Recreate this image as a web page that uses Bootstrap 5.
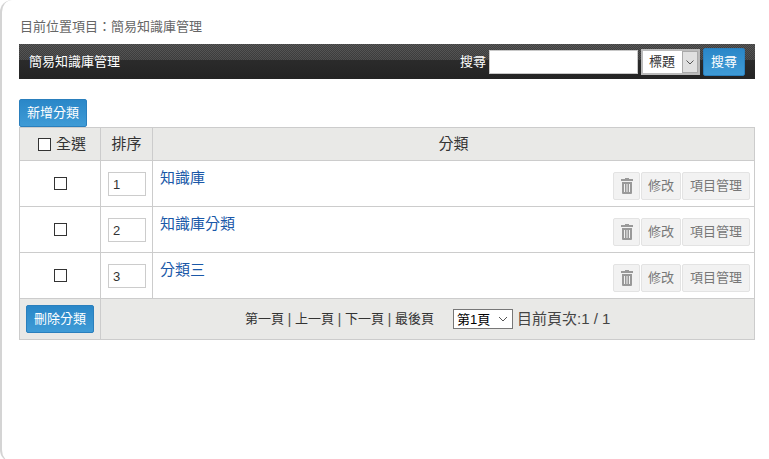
<!DOCTYPE html>
<html lang="zh-Hant">
<head>
<meta charset="utf-8">
<title>簡易知識庫管理</title>
<link href="https://cdn.jsdelivr.net/npm/bootstrap@5.3.0/dist/css/bootstrap.min.css" rel="stylesheet">
<style>
html,body{height:100%;background:#fff;overflow:hidden}
body{font-family:"Liberation Sans","Noto Sans CJK TC",sans-serif;font-size:14px;color:#333}
.shell{height:462px;border:solid #d4d4d4;border-width:0 0 0 2px;border-radius:12px 0 0 12px;padding:18px 14px 0 17px}
.crumb{font-size:13px;line-height:17px;color:#666;margin-bottom:9px;padding-left:1px}
.topbar{height:35px;padding:0 10px;color:#fff;font-size:13px;background:linear-gradient(#2b2b2b,#242424) bottom/100% 19px no-repeat,linear-gradient(rgba(60,60,60,0),rgba(44,44,44,.55)),repeating-conic-gradient(#5a5a5a 0 25%,#404040 0 50%) 0 0/2px 2px}
.topbar-title{padding-top:1px}
.search-row{gap:3px}
.search-box{width:149px;height:24px;border:1px solid #c8c8c8;background:#fff;border-radius:0}
.search-sel{width:59px;height:26px;border:2px solid #bbb;border-radius:0;font-size:13px;padding:0 0 0 6px;color:#333;appearance:none;background:#fff url("data:image/svg+xml,%3Csvg xmlns='http://www.w3.org/2000/svg' width='16' height='22'%3E%3Crect x='.5' y='.5' width='15' height='21' fill='%23e0e0e0' stroke='%23aaa'/%3E%3Cpath d='M4.500 9.500l3.500 3.500 3.500-3.500' fill='none' stroke='%23555'/%3E%3C/svg%3E") right 0 center no-repeat}
.blue-btn{background:linear-gradient(#2a87c8,#3f9bd6);border:1px solid #2a7fbd;color:#fff;border-radius:2px;font-size:13px;line-height:18px;padding:4px 7px;height:28px}
.blue-btn:hover{color:#fff}
.add-row{margin-top:20px;height:28px}
.grid-tbl{width:736px;table-layout:fixed;margin:0}
.grid-tbl td,.grid-tbl th{border:1px solid #ccc;padding:0;vertical-align:middle;color:#333;font-weight:400;font-size:15px}
.grid-tbl .head-row th{height:33px;background:#e9e9e7;text-align:center}
.grid-tbl .head-row th.all-cell{padding-left:4px}
.all-cell .tick{margin-right:1px}
.grid-tbl .body-row td{height:46px}
.grid-tbl .foot-row td{height:41px;background:#e9e9e7}
.tick{width:13px;height:13px;margin:0;appearance:none;border:1px solid #333;background:#fff;display:inline-block;vertical-align:-2px}
.order{width:38px;height:24px;border:1px solid #ccc;padding:0 4px;font-size:13px;color:#333;display:block;margin:1px 0 0 7px}
.item-link{color:#1a58a8;text-decoration:none;font-size:15px;line-height:20px;display:block;margin:-12px 0 0 7px}
.ghost{background:#f2f2f2;border:1px solid #e3e3e3;color:#777;font-size:13px;border-radius:2px;height:28px;line-height:26px;text-align:center}
.g-edit{width:40px}
.g-items{width:68px}
.ghost-icon{width:27px;display:flex;align-items:center;justify-content:center}
.ops{margin:4px 4px 0 0;gap:1px}
.pager{padding-left:144px;font-size:13px}
.pager a{color:#333;text-decoration:none}
.pager-sep{width:11px;text-align:center;color:#555;font-size:15px}
.pager-sel{width:60px;height:20px;border:1px solid #777;font-size:13px;padding:0 0 0 3px;border-radius:0;color:#000;appearance:none;background:#fff url("data:image/svg+xml,%3Csvg xmlns='http://www.w3.org/2000/svg' width='10' height='6'%3E%3Cpath d='M1 1l4 4 4-4' fill='none' stroke='%23555'/%3E%3C/svg%3E") right 4px center no-repeat;margin:0 4px 0 19px}
.pager-now{font-size:15px;color:#444}
</style>
</head>
<body>
<div class="shell">
  <div class="crumb">目前位置項目：簡易知識庫管理</div>
  <div class="topbar d-flex align-items-center justify-content-between">
    <div class="topbar-title">簡易知識庫管理</div>
    <div class="d-flex align-items-center search-row">
      <span>搜尋</span>
      <input class="search-box" type="text" aria-label="搜尋">
      <select class="search-sel" aria-label="欄位"><option>標題</option></select>
      <button class="blue-btn" type="button">搜尋</button>
    </div>
  </div>
  <div class="add-row"><button class="blue-btn" type="button">新增分類</button></div>
  <table class="grid-tbl">
    <colgroup><col style="width:81px"><col style="width:52px"><col></colgroup>
    <tr class="head-row">
      <th class="all-cell"><input class="tick" type="checkbox" aria-label="全選"> 全選</th>
      <th>排序</th>
      <th>分類</th>
    </tr>
    <tr class="body-row">
      <td class="text-center"><input class="tick" type="checkbox" aria-label="選取"></td>
      <td><input class="order" value="1" aria-label="排序"></td>
      <td>
        <div class="d-flex justify-content-between align-items-center">
          <a class="item-link" href="#">知識庫</a>
          <div class="d-flex ops">
            <span class="ghost ghost-icon"><svg width="14" height="17" viewBox="0 0 14 17"><path d="M5 1h4v1h4v2H1V2h4z" fill="#999"/><path d="M2 5h10v11a1 1 0 0 1-1 1H3a1 1 0 0 1-1-1z" fill="#999"/><path d="M4.500 7v8M7 7v8M9.500 7v8" stroke="#f2f2f2"/></svg></span>
            <span class="ghost g-edit">修改</span><span class="ghost g-items">項目管理</span>
          </div>
        </div>
      </td>
    </tr>
    <tr class="body-row">
      <td class="text-center"><input class="tick" type="checkbox" aria-label="選取"></td>
      <td><input class="order" value="2" aria-label="排序"></td>
      <td>
        <div class="d-flex justify-content-between align-items-center">
          <a class="item-link" href="#">知識庫分類</a>
          <div class="d-flex ops">
            <span class="ghost ghost-icon"><svg width="14" height="17" viewBox="0 0 14 17"><path d="M5 1h4v1h4v2H1V2h4z" fill="#999"/><path d="M2 5h10v11a1 1 0 0 1-1 1H3a1 1 0 0 1-1-1z" fill="#999"/><path d="M4.500 7v8M7 7v8M9.500 7v8" stroke="#f2f2f2"/></svg></span>
            <span class="ghost g-edit">修改</span><span class="ghost g-items">項目管理</span>
          </div>
        </div>
      </td>
    </tr>
    <tr class="body-row">
      <td class="text-center"><input class="tick" type="checkbox" aria-label="選取"></td>
      <td><input class="order" value="3" aria-label="排序"></td>
      <td>
        <div class="d-flex justify-content-between align-items-center">
          <a class="item-link" href="#">分類三</a>
          <div class="d-flex ops">
            <span class="ghost ghost-icon"><svg width="14" height="17" viewBox="0 0 14 17"><path d="M5 1h4v1h4v2H1V2h4z" fill="#999"/><path d="M2 5h10v11a1 1 0 0 1-1 1H3a1 1 0 0 1-1-1z" fill="#999"/><path d="M4.500 7v8M7 7v8M9.500 7v8" stroke="#f2f2f2"/></svg></span>
            <span class="ghost g-edit">修改</span><span class="ghost g-items">項目管理</span>
          </div>
        </div>
      </td>
    </tr>
    <tr class="foot-row">
      <td class="text-center"><button class="blue-btn" type="button">刪除分類</button></td>
      <td colspan="2">
        <div class="pager d-flex align-items-center">
          <a href="#">第一頁</a><span class="pager-sep">|</span><a href="#">上一頁</a><span class="pager-sep">|</span><a href="#">下一頁</a><span class="pager-sep">|</span><a href="#">最後頁</a>
          <select class="pager-sel" aria-label="頁次"><option>第1頁</option></select><span class="pager-now">目前頁次:1 / 1</span>
        </div>
      </td>
    </tr>
  </table>
</div>
<script src="https://cdn.jsdelivr.net/npm/bootstrap@5.3.0/dist/js/bootstrap.bundle.min.js"></script>
</body>
</html>
